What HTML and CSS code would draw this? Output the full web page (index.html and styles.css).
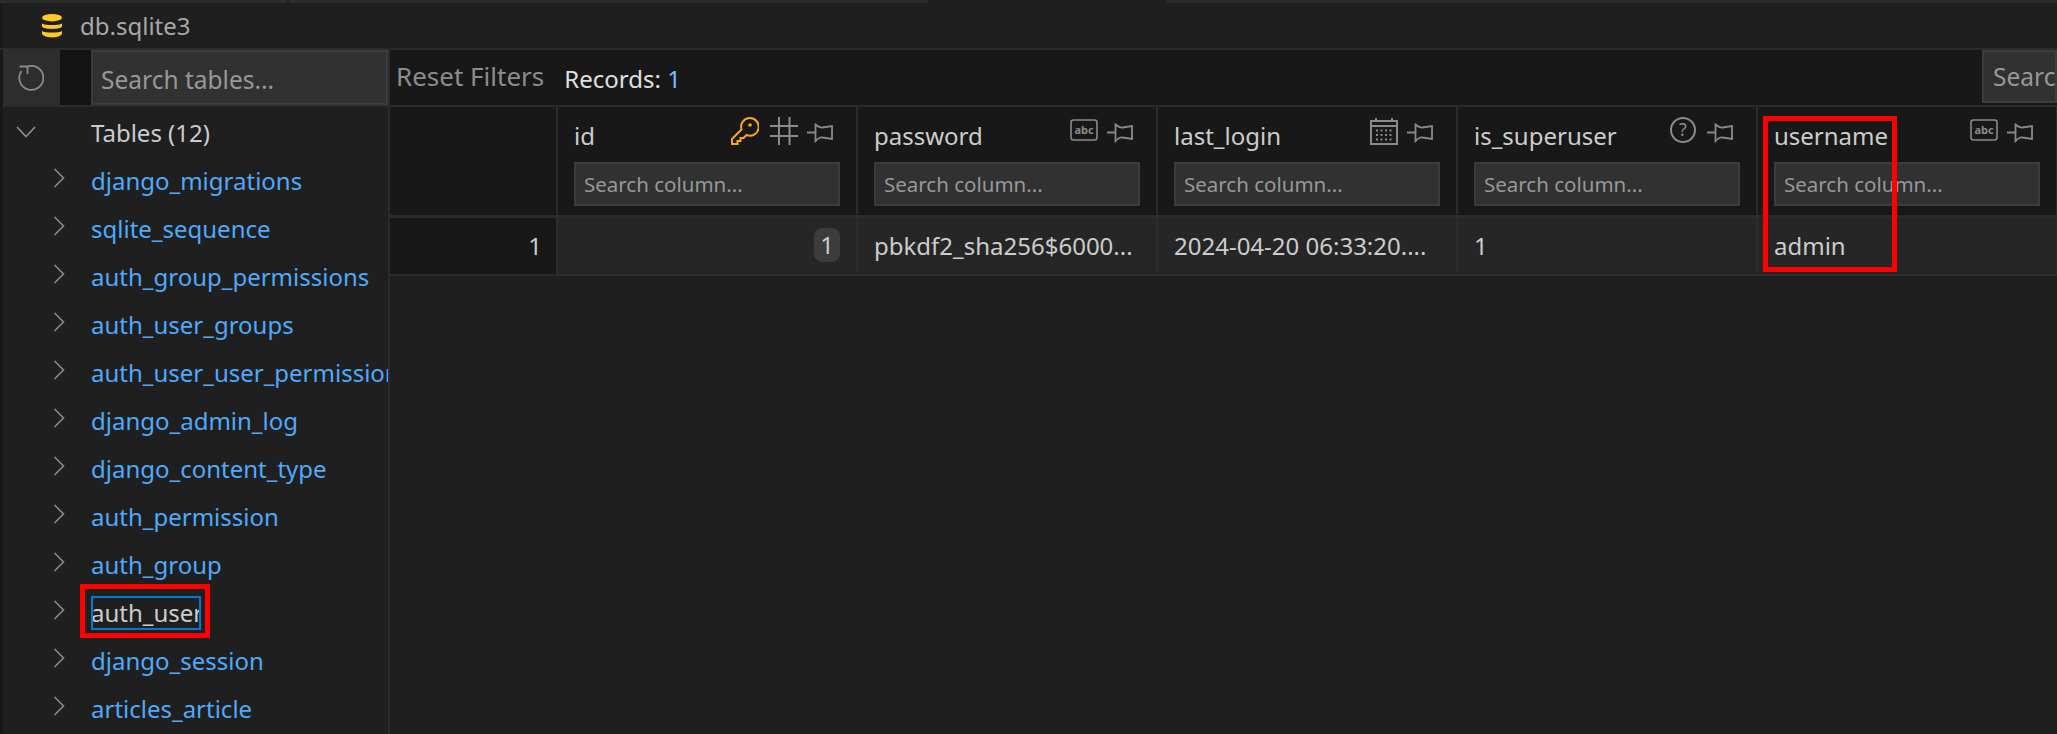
FILE: index.html
```html
<!DOCTYPE html>
<html lang="en">
  <head>
    <meta charset="UTF-8" />
    <meta name="viewport" content="width=device-width, initial-scale=1.0" />
    <title>db.sqlite3</title>
    <link rel="stylesheet" href="styles.css">
  </head>
  <body>
    <svg class="sprites" width="0" height="0">
      <symbol id="pin" viewBox="0 0 26 20">
        <path d="M0 9.500H8.500M8.500 1.500C11 3.500 13 5 15.500 4.500L25 3V16L15.500 14.500C13 14 11 15.500 8.500 18Z" />
      </symbol>
      <symbol id="chev-right" viewBox="0 0 12 20">
        <path d="M1.500 1L10.500 10L1.500 19" />
      </symbol>
    </svg>

    <div class="tabline">
      <span class="tab-a"></span>
      <span class="tab-b"></span>
      <span class="tab-c"></span>
      <span class="tab-d"></span>
    </div>

    <div class="titlebar">
      <svg class="db-icon" viewBox="0 0 20 24">
        <ellipse cx="10" cy="3.700" rx="10" ry="3.700" />
        <path d="M0 9.500C3 11.500 17 11.500 20 9.500V13C17 15.500 3 15.500 0 13Z" />
        <path d="M0 17C3 19 17 19 20 17V20C17 24.500 3 24.500 0 20Z" />
      </svg>
      <span class="db-name">db.sqlite3</span>
    </div>

    <div class="viewer">
      <aside class="sidebar">
        <div class="side-tools">
          <button class="refresh">
            <svg viewBox="0 0 26 26">
              <path d="M1.500 1.500H9.500V9M9.500 1.500A12 12 0 1 1 3.500 6" />
            </svg>
          </button>
          <span class="tool-gap"></span>
          <input class="table-search" type="text" placeholder="Search tables..." />
        </div>

        <div class="tree-head">
          <svg class="chev-down" viewBox="0 0 20 12"><path d="M1 1L10 10.500L19 1" /></svg>
          <span>Tables (12)</span>
        </div>
        <ul class="tree">
          <li><svg><use href="#chev-right" /></svg><span>django_migrations</span></li>
          <li><svg><use href="#chev-right" /></svg><span>sqlite_sequence</span></li>
          <li><svg><use href="#chev-right" /></svg><span>auth_group_permissions</span></li>
          <li><svg><use href="#chev-right" /></svg><span>auth_user_groups</span></li>
          <li><svg><use href="#chev-right" /></svg><span>auth_user_user_permissions</span></li>
          <li><svg><use href="#chev-right" /></svg><span>django_admin_log</span></li>
          <li><svg><use href="#chev-right" /></svg><span>django_content_type</span></li>
          <li><svg><use href="#chev-right" /></svg><span>auth_permission</span></li>
          <li><svg><use href="#chev-right" /></svg><span>auth_group</span></li>
          <li class="active"><svg><use href="#chev-right" /></svg><span>auth_user</span></li>
          <li><svg><use href="#chev-right" /></svg><span>django_session</span></li>
          <li><svg><use href="#chev-right" /></svg><span>articles_article</span></li>
        </ul>
      </aside>

      <main class="content">
        <div class="main-tools">
          <span class="reset">Reset Filters</span>
          <span class="records">Records: <b>1</b></span>
          <input class="global-search" type="text" placeholder="Search..." />
        </div>

        <div class="grid">
          <div class="head corner"></div>

          <div class="head">
            <div class="col-title">
              <span class="col-name">id</span>
              <svg class="i-type key" viewBox="0 0 28 28">
                <path d="M10.500 12.500L1 22V27H6.500V24H9.500V21H12.500L15.500 18A8.800 8.800 0 1 0 10.500 12.500Z" />
                <circle cx="19" cy="8" r="1.800" />
              </svg>
              <svg class="i-type hash" viewBox="0 0 28 28">
                <path d="M9 0V28M19.500 0V28M0 9H28M0 19H28" />
              </svg>
              <svg class="i-pin"><use href="#pin" /></svg>
            </div>
            <input class="col-search" type="text" placeholder="Search column..." />
          </div>

          <div class="head">
            <div class="col-title">
              <span class="col-name">password</span>
              <svg class="i-abc" viewBox="0 0 28 22">
                <rect x="1" y="1" width="26" height="20" rx="2.500" />
                <text x="14" y="14.500" class="icon-text abc-text">abc</text>
              </svg>
              <svg class="i-pin"><use href="#pin" /></svg>
            </div>
            <input class="col-search" type="text" placeholder="Search column..." />
          </div>

          <div class="head">
            <div class="col-title">
              <span class="col-name">last_login</span>
              <svg class="i-type cal" viewBox="0 0 28 28">
                <path d="M1 4H27V27H1ZM1 9H27M6 1V4M22 1V4" />
                <path class="dots" d="M6 13.500H23M6 18H23M6 22.500H23" />
              </svg>
              <svg class="i-pin"><use href="#pin" /></svg>
            </div>
            <input class="col-search" type="text" placeholder="Search column..." />
          </div>

          <div class="head">
            <div class="col-title">
              <span class="col-name">is_superuser</span>
              <svg class="i-type help" viewBox="0 0 26 26">
                <circle cx="13" cy="13" r="12" />
                <text x="13" y="19" class="icon-text help-text">?</text>
              </svg>
              <svg class="i-pin"><use href="#pin" /></svg>
            </div>
            <input class="col-search" type="text" placeholder="Search column..." />
          </div>

          <div class="head">
            <div class="col-title">
              <span class="col-name">username</span>
              <svg class="i-abc" viewBox="0 0 28 22">
                <rect x="1" y="1" width="26" height="20" rx="2.500" />
                <text x="14" y="14.500" class="icon-text abc-text">abc</text>
              </svg>
              <svg class="i-pin"><use href="#pin" /></svg>
            </div>
            <input class="col-search" type="text" placeholder="Search column..." />
          </div>

          <div class="row-num">1</div>
          <div class="cell num"><span class="badge">1</span></div>
          <div class="cell">pbkdf2_sha256$6000...</div>
          <div class="cell">2024-04-20 06:33:20....</div>
          <div class="cell">1</div>
          <div class="cell">admin</div>
        </div>
      </main>
    </div>

    <!-- red annotation boxes drawn over the screenshot -->
    <div class="mark mark-table"></div>
    <div class="mark mark-col"></div>
  </body>
</html>
```

FILE: styles.css
```css
* {
  box-sizing: border-box;
}
html,
body {
  margin: 0;
  padding: 0;
}
body {
  position: relative;
  width: 2057px;
  height: 734px;
  overflow: hidden;
  background-color: #1f1f1f;
  color: #cccccc;
  font-family: "Noto Sans", "Open Sans", sans-serif;
  font-size: 24px;
}
.sprites {
  position: absolute;
}
input {
  font-family: inherit;
  outline: none;
  color: #cccccc;
  background-color: #313131;
  border: 2px solid #3c3c3c;
  border-radius: 0;
}
input::placeholder {
  color: #989898;
  opacity: 1;
}

/* top strip */
.tabline {
  display: flex;
  height: 3px;
}
.tabline span {
  display: block;
  height: 3px;
  background-color: #2b2b2b;
}
.tab-a {
  width: 287px;
}
.tab-b {
  width: 639px;
  margin-left: 2px;
}
.tab-c {
  width: 239px;
  background-color: transparent !important;
}
.tab-d {
  flex: 1;
}

.titlebar {
  display: flex;
  align-items: center;
  height: 45px;
  padding-left: 42px;
  border-left: 2px solid #181818;
}
.db-icon {
  width: 20px;
  height: 24px;
  margin-left: -2px;
  fill: #ffc91f;
}
.db-name {
  margin-left: 18px;
  color: #a8a8a8;
}

.viewer {
  display: flex;
  height: 686px;
  border-top: 2px solid #2b2b2b;
}

/* left panel */
.sidebar {
  flex: none;
  width: 390px;
  border-right: 2px solid #2b2b2b;
  border-left: 3px solid #181818;
  overflow: hidden;
}
.side-tools {
  display: flex;
  height: 57px;
  border-bottom: 2px solid #2b2b2b;
}
.refresh {
  display: flex;
  align-items: center;
  justify-content: center;
  width: 57px;
  padding: 0;
  border: none;
  background-color: #2d2d2d;
}
.refresh svg {
  width: 26px;
  height: 26px;
  margin-right: 1px;
  fill: none;
  stroke: #8a8a8a;
  stroke-width: 1.800;
}
.tool-gap {
  width: 31px;
  background-color: #141414;
}
.table-search {
  flex: 1;
  min-width: 0;
  padding: 4px 0 0 8px;
  font-size: 24.500px;
}
.tree-head {
  display: flex;
  align-items: center;
  height: 50px;
}
.chev-down {
  width: 20px;
  height: 12px;
  margin-left: 13px;
  fill: none;
  stroke: #8f8f8f;
  stroke-width: 1.600;
}
.tree-head span {
  margin-left: 55px;
}
.tree {
  margin: 0;
  padding: 0;
  list-style: none;
  color: #4daafc;
}
.tree li {
  display: flex;
  align-items: center;
  height: 48px;
  white-space: nowrap;
}
.tree svg {
  flex: none;
  width: 12px;
  height: 20px;
  margin: -6px 0 0 50px;
  fill: none;
  stroke: #8a8a8a;
  stroke-width: 1.600;
}
.tree li span {
  margin-left: 26px;
  line-height: 34px;
}
.tree .active span {
  display: block;
  width: 110px;
  height: 34px;
  overflow: hidden;
  color: #cccccc;
  outline: 2px solid #0078d4;
  outline-offset: -2px;
}

/* right panel */
.content {
  flex: 1;
  min-width: 0;
}
.main-tools {
  display: flex;
  align-items: flex-start;
  height: 57px;
  padding-left: 6px;
  background-color: #181818;
  border-bottom: 2px solid #2b2b2b;
}
.reset {
  margin-top: 8px;
  color: #8c8c8c;
  font-size: 26px;
}
.records {
  margin: 12px 0 0 20px;
  color: #e0e0e0;
}
.records b {
  font-weight: 400;
  color: #75beff;
}
.global-search {
  width: 75px;
  height: 53px;
  margin-left: auto;
  padding: 0 0 0 9px;
  font-size: 24.500px;
}
.grid {
  display: grid;
  grid-template-columns: 168px repeat(5, 300px);
  grid-template-rows: 111px 58px;
  width: 1668px;
}
.head {
  padding: 10px 16px 0;
  background-color: #181818;
  border-right: 2px solid #2b2b2b;
  border-bottom: 3px solid #2b2b2b;
}
.corner {
  padding: 0;
}
.col-title {
  display: flex;
  align-items: flex-start;
  height: 45px;
  padding-right: 7px;
}
.col-name {
  margin-right: auto;
  padding-top: 3px;
  line-height: 32px;
}
.i-type {
  flex: none;
  width: 28px;
  height: 28px;
  fill: none;
  stroke: #8a8a8a;
  stroke-width: 2;
}
.key {
  stroke: #f5a623;
  margin-right: 11px;
}
.key circle {
  fill: #f5a623;
  stroke: none;
}
.hash {
  margin-right: 9px;
}
.cal {
  margin-right: 9px;
}
.cal .dots {
  stroke-width: 2.200;
  stroke-dasharray: 2 2.500;
}
.help {
  width: 26px;
  height: 26px;
  margin-right: 11px;
}
.i-abc {
  flex: none;
  width: 28px;
  height: 22px;
  margin: 2px 9px 0 0;
  fill: none;
  stroke: #8a8a8a;
  stroke-width: 1.600;
}
.i-pin {
  flex: none;
  width: 26px;
  height: 20px;
  margin-top: 6px;
  fill: none;
  stroke: #8a8a8a;
  stroke-width: 1.800;
}
.icon-text {
  fill: #8a8a8a;
  stroke: none;
  text-anchor: middle;
  font-family: "Noto Sans", sans-serif;
}
.abc-text {
  font-size: 11px;
  font-weight: 700;
}
.help-text {
  font-size: 18px;
}
.col-search {
  display: block;
  width: 100%;
  height: 44px;
  padding: 0 0 0 8px;
  font-size: 20.500px;
}
.row-num {
  padding: 11px 14px 0 0;
  text-align: right;
  background-color: #181818;
  border-right: 2px solid #2b2b2b;
  border-bottom: 2px solid #2b2b2b;
}
.cell {
  padding: 11px 16px 0;
  white-space: nowrap;
  overflow: hidden;
  background-color: #262626;
  border-right: 2px solid #2b2b2b;
  border-bottom: 2px solid #2b2b2b;
}
.num {
  padding-top: 10px;
  text-align: right;
}
.badge {
  display: inline-block;
  width: 26px;
  height: 34px;
  line-height: 34px;
  text-align: center;
  border-radius: 8px;
  background-color: #3c3c3c;
}

/* annotations */
.mark {
  position: absolute;
  border: 5px solid #ff0000;
}
.mark-table {
  left: 80px;
  top: 584px;
  width: 130px;
  height: 54px;
}
.mark-col {
  left: 1763px;
  top: 116px;
  width: 134px;
  height: 156px;
}
```
